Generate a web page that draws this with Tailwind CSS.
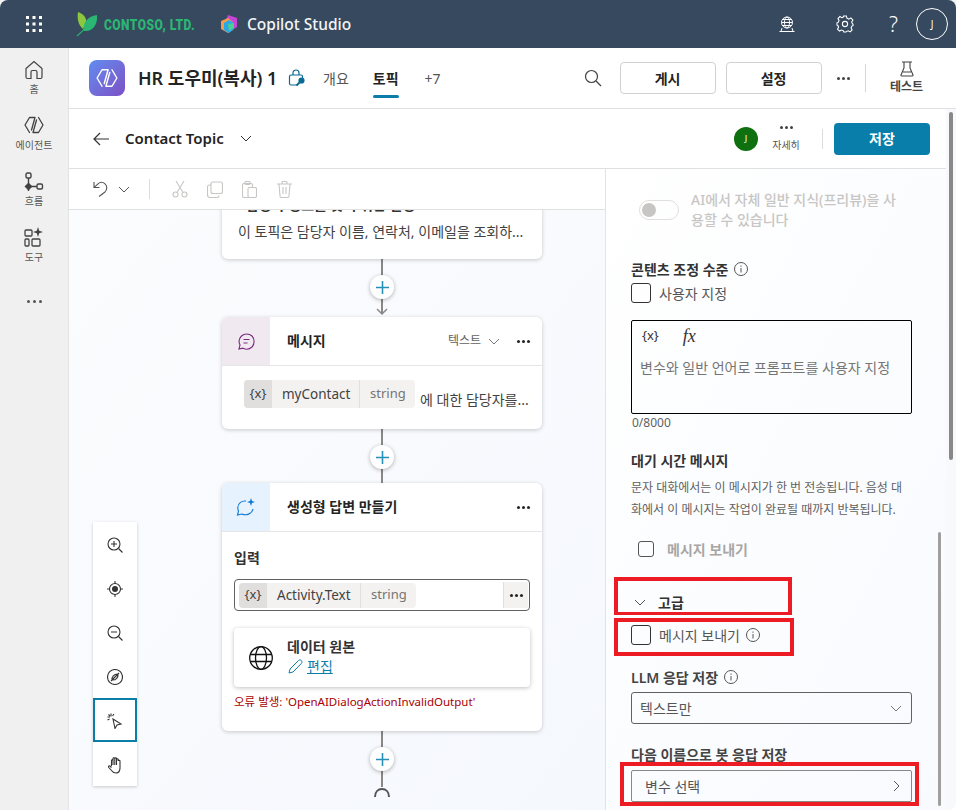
<!DOCTYPE html>
<html lang="ko">
<head>
<meta charset="UTF-8">
<title>Copilot Studio</title>
<script src="https://cdn.jsdelivr.net/npm/@tailwindcss/browser@4"></script>
</head>
<body class="bg-white font-['Noto_Sans','Noto_Sans_CJK_KR',sans-serif] text-[14px] text-[#242424]">
<div class="relative w-[956px] h-[810px] overflow-hidden flex flex-col bg-[#f3f3f3]">

<!-- top bar -->
<header class="h-[48px] shrink-0 bg-[#36495f] rounded-t-lg flex items-center text-white">
  <svg class="ml-[26px] w-[16px] h-[16px]" viewBox="0 0 16 16" fill="#fff"><rect x="0" y="0" width="3" height="3"/><rect x="6.5" y="0" width="3" height="3"/><rect x="13" y="0" width="3" height="3"/><rect x="0" y="6.5" width="3" height="3"/><rect x="6.5" y="6.5" width="3" height="3"/><rect x="13" y="6.5" width="3" height="3"/><rect x="0" y="13" width="3" height="3"/><rect x="6.5" y="13" width="3" height="3"/><rect x="13" y="13" width="3" height="3"/></svg>
  <svg class="ml-[34px] w-[22px] h-[25px]" viewBox="0 0 22 25"><path d="M1 24C5 21 8 18 11 13" stroke="#2bb673" stroke-width="1.2" fill="none"/><path d="M7 17C2 13 1 6 2 0C7 2 11 5 10 11Z" fill="#8dc63f"/><path d="M8 19C6 12 11 4 21 3C22 12 17 20 8 19Z" fill="#2bb673"/></svg>
  <span class="ml-[6px] w-[116px] font-['Roboto',sans-serif] font-black text-[15px] tracking-[0.6px] text-[#2bb673] whitespace-nowrap origin-left scale-x-[0.8] translate-y-px">CONTOSO, LTD.</span>
  <svg class="w-[18px] h-[18px]" viewBox="0 0 18 18"><path d="M8 0L17 3V12L12 15L5 8Z" fill="#c644d8"/><path d="M1 6L8 3L13 7V15L8 18L1 14Z" fill="#f59a4a"/><path d="M4 8L9 5L14 8V14L9 18L4 15Z" fill="#27a9e8"/><path d="M8 9L14 8V13L9 16Z" fill="#4ad08f"/></svg>
  <span class="ml-[9px] text-[15.5px] font-medium text-[#f5f5f5] translate-y-px">Copilot Studio</span>
  <div class="ml-auto flex items-center">
    <svg class="w-[16px] h-[16px]" viewBox="0 0 16 16" fill="none" stroke="#fff" stroke-width="1"><circle cx="8" cy="6.5" r="5.5"/><ellipse cx="8" cy="6.5" rx="2.5" ry="5.5"/><path d="M2.5 6.5H13.5M3.5 3.5H12.5M3.5 9.5H12.5M0.5 15.5H15.5M2 15.5L3 12M14 15.5L13 12"/></svg>
    <svg class="ml-[41px] w-[18px] h-[18px]" viewBox="0 0 18 18" fill="none" stroke="#fff" stroke-width="1.1"><circle cx="9" cy="9" r="2.6"/><path d="M7.6 1H10.4L10.9 3.2L12.9 4.1L14.9 2.9L16.9 5L15.7 7L16.5 8.9L17 9.1V10.7L15.8 11.1L15.1 13L16.1 15L14.2 16.9L12.2 15.8L10.4 16.6L10 17H7.8L7.4 15.8L5.5 15L3.5 16.1L1.5 14.1L2.6 12.2L1.9 10.5L1 10.2V7.8L2.2 7.4L3 5.5L2 3.5L3.9 1.5L5.9 2.7L7.3 2.1Z"/></svg>
    <span class="ml-[35px] text-[21px] leading-none font-light text-white w-[12px]">?</span>
    <span class="ml-[15px] mr-[8px] w-[32px] h-[32px] rounded-full border border-white flex items-center justify-center text-[10px]">J</span>
  </div>
</header>

<div class="flex flex-1 min-h-0">
  <!-- left rail -->
  <nav class="w-[68px] shrink-0 bg-[#f0f0f0] flex flex-col items-center text-[10px] leading-[14px] text-[#555]">
    <svg class="mt-[12px] w-[20px] h-[20px]" viewBox="0 0 20 20" fill="none" stroke="#424242" stroke-width="1.2"><path d="M2 8.5L10 1.5L18 8.5V17C18 18 17.4 18.5 16.5 18.5H13V12C13 11 12.5 10.5 11.5 10.5H8.5C7.5 10.5 7 11 7 12V18.5H3.5C2.6 18.5 2 18 2 17Z"/></svg>
    <span class="mt-[2px]">홈</span>
    <svg class="mt-[19px] w-[20px] h-[20px]" viewBox="0 0 20 20" fill="none" stroke="#424242" stroke-width="1.300" stroke-linejoin="round" stroke-linecap="round"><path d="M5.500 17.500L1 10L5.500 2.500H11L7.500 15"/><path d="M14.500 2.500L19 10L14.500 17.500H9L12.500 5"/></svg>
    <span class="mt-[3px]">에이전트</span>
    <svg class="mt-[20px] w-[20px] h-[24px]" viewBox="0 0 20 24" fill="none" stroke="#424242" stroke-width="1.400"><rect x="2" y="1" width="5" height="5" rx="1.5"/><path d="M4.5 6V19M7 14.500H13"/><path d="M4.500 11.500L7.500 14.500L4.500 17.500L1.500 14.500Z" fill="#424242"/><rect x="13" y="12" width="5.500" height="5" rx="1.500"/></svg>
    <span class="-mt-[2px]">흐름</span>
    <svg class="mt-[19px] w-[20px] h-[20px]" viewBox="0 0 20 20" fill="none" stroke="#424242" stroke-width="1.300"><rect x="1" y="3" width="7" height="6" rx="1"/><rect x="1" y="12" width="4" height="7" rx="1"/><rect x="8" y="12" width="8" height="7" rx="1"/><path d="M14 0L15.200 3.800L19 5L15.200 6.200L14 10L12.800 6.200L9 5L12.800 3.800Z" fill="#424242" stroke="none"/></svg>
    <span class="mt-[3px]">도구</span>
    <div class="mt-[36px] flex gap-[3px]"><i class="w-[3px] h-[3px] rounded-full bg-[#555]"></i><i class="w-[3px] h-[3px] rounded-full bg-[#555]"></i><i class="w-[3px] h-[3px] rounded-full bg-[#555]"></i></div>
  </nav>

  <main class="flex-1 min-w-0 flex flex-col border-l border-[#e3e3e3] bg-white">
    <!-- agent header -->
    <div class="h-[61px] shrink-0 flex items-center border-b border-[#e0e0e0] pl-[20px]">
      <div class="w-[36px] h-[36px] rounded-lg bg-gradient-to-br from-[#5d8df0] to-[#7a4fc4] flex items-center justify-center">
        <svg class="w-[22px] h-[22px]" viewBox="0 0 20 20" fill="none" stroke="#fff" stroke-width="1.300" stroke-linejoin="round" stroke-linecap="round"><path d="M5.500 17.500L1 10L5.500 2.500H11L7.500 15"/><path d="M14.500 2.500L19 10L14.500 17.500H9L12.500 5"/></svg>
      </div>
      <span class="ml-[13px] text-[18px] font-semibold whitespace-nowrap w-[150px]">HR 도우미(복사) 1</span>
      <svg class="w-[18px] h-[18px]" viewBox="0 0 18 18" fill="none" stroke="#0b6a94" stroke-width="1.200"><path d="M5 6V4C5 2 6.500 1 8 1C9.500 1 11 2 11 4V6"/><path d="M9 16H3C2 16 1.500 15.500 1.500 14.500V7.500C1.500 6.500 2 6 3 6H13C14 6 14.500 6.500 14.500 7.500V9"/><circle cx="13.500" cy="11.500" r="2.500" fill="#0b6a94"/><path d="M12 13L8.500 16.500" stroke-width="2"/></svg>
      <span class="ml-[17px] text-[#555]">개요</span>
      <span class="relative ml-[24px] font-semibold">토픽<i class="absolute left-0 right-0 top-[27px] h-[3px] rounded-sm bg-[#0b7ea8]"></i></span>
      <span class="ml-[26px] text-[#555]">+7</span>
      <svg class="ml-[143px] w-[18px] h-[18px]" viewBox="0 0 18 18" fill="none" stroke="#424242" stroke-width="1.200"><circle cx="7.500" cy="7.500" r="6"/><path d="M12 12L17 17"/></svg>
      <button class="ml-[18px] w-[96px] h-[32px] border border-[#d1d1d1] rounded font-bold">게시</button>
      <button class="ml-[10px] w-[96px] h-[32px] border border-[#d1d1d1] rounded font-bold">설정</button>
      <div class="ml-[15px] flex gap-[2px]"><i class="w-[3px] h-[3px] rounded-full bg-[#424242]"></i><i class="w-[3px] h-[3px] rounded-full bg-[#424242]"></i><i class="w-[3px] h-[3px] rounded-full bg-[#424242]"></i></div>
      <i class="ml-[15px] w-px h-[28px] bg-[#d6d6d6]"></i>
      <div class="ml-[25px] w-[32px] flex flex-col items-center">
        <svg class="w-[14px] h-[16px]" viewBox="0 0 14 16" fill="none" stroke="#424242" stroke-width="1.100"><path d="M2 1H12M4 1V7L1 14C0.800 14.600 1.200 15 1.800 15H12.200C12.800 15 13.200 14.600 13 14L10 7V1M3 11H11"/></svg>
        <span class="mt-[2px] text-[12px] leading-[16px] font-semibold text-[#444] whitespace-nowrap">테스트</span>
      </div>
    </div>

    <div class="flex-1 min-h-0 flex">
      <div class="w-[877px] shrink-0 flex flex-col">
        <!-- topic row -->
        <div class="h-[60px] shrink-0 flex items-center border-b border-[#e0e0e0] pl-[24px]">
          <svg class="w-[16px] h-[14px]" viewBox="0 0 16 14" fill="none" stroke="#333" stroke-width="1.200"><path d="M16 7H1M7 1L1 7L7 13"/></svg>
          <span class="ml-[16px] w-[115px] text-[15px] font-semibold whitespace-nowrap">Contact Topic</span>
          <svg class="w-[12px] h-[7px]" viewBox="0 0 12 7" fill="none" stroke="#333"><path d="M1 1L6 6L11 1"/></svg>
          <span class="ml-[482px] w-[24px] h-[24px] rounded-full bg-[#0e700e] text-white text-[9px] flex items-center justify-center">J</span>
          <div class="ml-[12px] w-[32px] flex flex-col items-center">
            <div class="flex gap-[2px]"><i class="w-[3px] h-[3px] rounded-full bg-[#424242]"></i><i class="w-[3px] h-[3px] rounded-full bg-[#424242]"></i><i class="w-[3px] h-[3px] rounded-full bg-[#424242]"></i></div>
            <span class="mt-[9px] text-[10px] leading-[14px] text-[#555] whitespace-nowrap">자세히</span>
          </div>
          <i class="ml-[20px] w-px h-[20px] bg-[#dcdcdc]"></i>
          <button class="ml-[11px] w-[96px] h-[32px] rounded bg-[#0a7eaa] text-white font-bold">저장</button>
        </div>

        <div class="flex-1 min-h-0 flex">
          <!-- canvas column -->
          <section class="relative w-[537px] shrink-0 border-r border-[#e3e3e3] bg-gradient-to-br from-[#fbfcfe] to-[#f5f8fd] overflow-hidden">
            <!-- toolbar -->
            <div class="relative z-10 h-[41px] bg-white border-b border-[#e0e0e0] flex items-center pl-[24px]">
              <svg class="w-[15px] h-[16px]" viewBox="0 0 15 16" fill="none" stroke="#555" stroke-width="1.100"><path d="M1 1V6.500H6.500M1.200 6.300L5 2.800C7 1 10 1 12 2.800C14.500 5 14.300 8.500 12 11L6 15.500"/></svg>
              <svg class="ml-[10px] w-[12px] h-[7px]" viewBox="0 0 12 7" fill="none" stroke="#555"><path d="M1 1L6 6L11 1"/></svg>
              <i class="ml-[19px] w-px h-[20px] bg-[#dcdcdc]"></i>
              <svg class="ml-[22px] w-[16px] h-[18px]" viewBox="0 0 16 18" fill="none" stroke="#c8c6c4" stroke-width="1.100"><circle cx="3.500" cy="14.500" r="2.500"/><circle cx="12.500" cy="14.500" r="2.500"/><path d="M5 12.500L12 1M11 12.500L4 1"/></svg>
              <svg class="ml-[19px] w-[16px] h-[17px]" viewBox="0 0 16 17" fill="none" stroke="#c8c6c4" stroke-width="1.100"><rect x="4" y="1" width="11.500" height="11.500" rx="2"/><path d="M4 4H2.500C1.500 4 0.500 5 0.500 6V14C0.500 15.500 1.500 16.500 3 16.500H10C11 16.500 12 15.500 12 14.500"/></svg>
              <svg class="ml-[19px] w-[15px] h-[17px]" viewBox="0 0 15 17" fill="none" stroke="#c8c6c4" stroke-width="1.100"><rect x="0.500" y="2.500" width="10" height="14" rx="1.500"/><rect x="3" y="0.500" width="5" height="3" rx="1"/><rect x="6" y="6.500" width="8.500" height="10" rx="1.500" fill="#fff"/></svg>
              <svg class="ml-[20px] w-[15px] h-[17px]" viewBox="0 0 15 17" fill="none" stroke="#c8c6c4" stroke-width="1.100"><path d="M0 3H15M5 3V1.500C5 1 5.500 0.500 6 0.500H9C9.500 0.500 10 1 10 1.500V3M2 3L3 15C3 16 3.800 16.500 4.500 16.500H10.500C11.200 16.500 12 16 12 15L13 3M6 6V13M9 6V13"/></svg>
            </div>

            <!-- diagram nodes: coordinates are relative to canvas (x-69, y-169) -->
            <i class="absolute left-[312px] top-[80px] w-[2px] h-[65px] bg-[#8a8886]"></i>
            <svg class="absolute left-[306px] top-[139px] w-[14px] h-[8px]" viewBox="0 0 14 8" fill="none" stroke="#8a8886" stroke-width="1.500"><path d="M2 1L7 6L12 1"/></svg>
            <i class="absolute left-[312px] top-[255px] w-[2px] h-[60px] bg-[#8a8886]"></i>
            <i class="absolute left-[312px] top-[556px] w-[2px] h-[62px] bg-[#8a8886]"></i>
            <svg class="absolute left-[304px] top-[618px] w-[18px] h-[10px]" viewBox="0 0 18 10" fill="none" stroke="#555" stroke-width="2"><path d="M2 10C2 5 5 2 9 2C13 2 16 5 16 10"/></svg>

            <article class="absolute left-[153px] top-[20px] w-[320px] h-[70px] bg-white rounded-md shadow-[0_1px_4px_rgba(0,0,0,0.2)] px-[16px]">
              <p class="absolute left-[24px] top-[6px] text-[14px] font-semibold text-[#333] leading-[20px] whitespace-nowrap">담당자 정보를 찾기 위한 설명</p>
              <p class="absolute left-[16px] top-[33px] leading-[20px] text-[#424242] whitespace-nowrap">이 토픽은 담당자 이름, 연락처, 이메일을 조회하...</p>
            </article>

            <article class="absolute left-[153px] top-[148px] w-[320px] h-[112px] bg-white rounded-md shadow-[0_1px_4px_rgba(0,0,0,0.2)] overflow-hidden">
              <div class="h-[49px] border-b border-[#e6e6e6] flex items-center">
                <div class="w-[48px] h-[48px] bg-[#f0e9f0] flex items-center justify-center">
                  <svg class="w-[17px] h-[17px]" viewBox="0 0 17 17" fill="none" stroke="#7b2a83" stroke-width="1.100"><path d="M1 16L2 12C0.500 9 1 5.500 3.500 3C6.500 0.200 11 0.300 14 3C16.800 6 16.800 11 14 14C11.500 16.300 8 16.700 5 15.200Z"/><path d="M5.500 6.500H11.500M5.500 10H9.500"/></svg>
                </div>
                <span class="ml-[17px] font-semibold -translate-y-px">메시지</span>
                <span class="ml-auto text-[12px] text-[#616161]">텍스트</span>
                <svg class="ml-[7px] w-[12px] h-[7px]" viewBox="0 0 12 7" fill="none" stroke="#777"><path d="M1 1L6 6L11 1"/></svg>
                <div class="ml-[17px] mr-[12px] flex gap-[2px]"><i class="w-[3px] h-[3px] rounded-full bg-[#242424]"></i><i class="w-[3px] h-[3px] rounded-full bg-[#242424]"></i><i class="w-[3px] h-[3px] rounded-full bg-[#242424]"></i></div>
              </div>
              <div class="flex items-center mt-[14px] pl-[22px] whitespace-nowrap">
                <div class="h-[28px] w-[171px] bg-[#f3f2f1] rounded-sm flex items-center overflow-hidden text-[#424242]">
                  <span class="w-[28px] h-full bg-[#e1dfdd] flex items-center justify-center text-[13px]">{x}</span>
                  <span class="ml-[10px] w-[77px] text-[13.500px]">myContact</span>
                  <i class="w-px h-full bg-[#e1dfdd]"></i>
                  <span class="ml-[10px] text-[13px] text-[#757575]">string</span>
                </div>
                <span class="ml-[5px] translate-y-[5px] text-[#424242]">에 대한 담당자를...</span>
              </div>
            </article>

            <article class="absolute left-[153px] top-[314px] w-[320px] h-[248px] bg-white rounded-md shadow-[0_1px_4px_rgba(0,0,0,0.2)] overflow-hidden">
              <div class="h-[49px] border-b border-[#e6e6e6] flex items-center">
                <div class="w-[48px] h-[48px] bg-[#e6f2fd] flex items-center justify-center">
                  <svg class="w-[20px] h-[20px]" viewBox="0 0 20 20" fill="none" stroke="#0f78d4" stroke-width="1.100"><path d="M10 4C6 3.500 2 6 1.800 10.500C1.700 12 2 13 2.500 14L1.500 18L6 17C10 19 16 17 17 12"/><path d="M15 1L16 4L19 5L16 6L15 9L14 6L11 5L14 4Z" fill="#0f78d4" stroke="none"/></svg>
                </div>
                <span class="ml-[17px] font-semibold -translate-y-px">생성형 답변 만들기</span>
                <div class="ml-auto mr-[12px] flex gap-[2px]"><i class="w-[3px] h-[3px] rounded-full bg-[#242424]"></i><i class="w-[3px] h-[3px] rounded-full bg-[#242424]"></i><i class="w-[3px] h-[3px] rounded-full bg-[#242424]"></i></div>
              </div>
              <div class="px-[12px]">
                <p class="mt-[16px] h-[20px] leading-[20px] font-semibold text-[#333]">입력</p>
                <div class="mt-[11px] h-[32px] border border-[#616161] rounded-sm flex items-center pl-[4px] pr-px">
                  <div class="h-[25px] w-[177px] bg-[#f3f2f1] rounded-sm flex items-center overflow-hidden text-[#424242]">
                    <span class="w-[28px] h-full bg-[#e1dfdd] flex items-center justify-center text-[13px]">{x}</span>
                    <span class="ml-[10px] w-[83px] text-[13.500px] whitespace-nowrap">Activity.Text</span>
                    <i class="w-px h-full bg-[#e1dfdd]"></i>
                    <span class="ml-[10px] text-[13px] text-[#757575]">string</span>
                  </div>
                  <div class="ml-auto w-[25px] h-[26px] bg-[#f3f2f1] border-l border-[#e1dfdd] flex items-center justify-center gap-[2px]"><i class="w-[3px] h-[3px] rounded-full bg-[#242424]"></i><i class="w-[3px] h-[3px] rounded-full bg-[#242424]"></i><i class="w-[3px] h-[3px] rounded-full bg-[#242424]"></i></div>
                </div>
                <div class="mt-[17px] h-[59px] bg-white rounded-sm shadow-[0_1px_4px_rgba(0,0,0,0.25)] flex items-center pl-[15px]">
                  <svg class="w-[24px] h-[24px]" viewBox="0 0 24 24" fill="none" stroke="#111" stroke-width="1.300"><circle cx="12" cy="12" r="11.300"/><ellipse cx="12" cy="12" rx="5.500" ry="11.300"/><path d="M1.500 8.500H22.500M1.500 15.500H22.500"/></svg>
                  <div class="ml-[14px] -translate-y-px">
                    <p class="leading-[20px] font-semibold text-[#333]">데이터 원본</p>
                    <p class="flex items-center h-[20px]">
                      <svg class="ml-[1px] w-[15px] h-[15px]" viewBox="0 0 15 15" fill="none" stroke="#0b7ea8" stroke-width="1"><path d="M1 14L2 10L10.500 1.500C11.300 0.700 12.500 0.700 13.300 1.500C14.200 2.400 14.200 3.500 13.400 4.400L5 13Z"/></svg>
                      <a class="ml-[4px] text-[#0b7ea8] underline">편집</a>
                    </p>
                  </div>
                </div>
                <p class="mt-[7px] text-[11.500px] leading-[16px] text-[#a80000] whitespace-nowrap">오류 발생: 'OpenAIDialogActionInvalidOutput'</p>
              </div>
            </article>

            <!-- add buttons -->
            <span class="absolute left-[301px] top-[106px] w-[24px] h-[24px] rounded-full bg-white shadow-[0_1px_4px_rgba(0,0,0,0.3)] flex items-center justify-center"><svg class="w-[13px] h-[13px]" viewBox="0 0 13 13" stroke="#2590b8" stroke-width="1.600"><path d="M6.500 0V13M0 6.500H13"/></svg></span>
            <span class="absolute left-[301px] top-[276px] w-[24px] h-[24px] rounded-full bg-white shadow-[0_1px_4px_rgba(0,0,0,0.3)] flex items-center justify-center"><svg class="w-[13px] h-[13px]" viewBox="0 0 13 13" stroke="#2590b8" stroke-width="1.600"><path d="M6.500 0V13M0 6.500H13"/></svg></span>
            <span class="absolute left-[301px] top-[578px] w-[24px] h-[24px] rounded-full bg-white shadow-[0_1px_4px_rgba(0,0,0,0.3)] flex items-center justify-center"><svg class="w-[13px] h-[13px]" viewBox="0 0 13 13" stroke="#2590b8" stroke-width="1.600"><path d="M6.500 0V13M0 6.500H13"/></svg></span>

            <!-- zoom controls -->
            <div class="absolute left-[24px] top-[353px] w-[44px] bg-white shadow-[0_1px_3px_rgba(0,0,0,0.2)] flex flex-col">
              <span class="h-[44px] pt-[2px] flex items-center justify-center"><svg class="w-[16px] h-[16px]" viewBox="0 0 16 16" fill="none" stroke="#333" stroke-width="1.100"><circle cx="7" cy="7" r="6"/><path d="M11.500 11.500L15.500 15.500M7 4V10M4 7H10"/></svg></span>
              <span class="h-[44px] pt-[2px] flex items-center justify-center"><svg class="w-[16px] h-[16px]" viewBox="0 0 16 16" fill="none" stroke="#333" stroke-width="1.100"><circle cx="8" cy="8" r="5.500"/><circle cx="8" cy="8" r="3" fill="#333" stroke="none"/><path d="M8 0V2.500M8 13.500V16M0 8H2.500M13.500 8H16"/></svg></span>
              <span class="h-[44px] pt-[2px] flex items-center justify-center"><svg class="w-[16px] h-[16px]" viewBox="0 0 16 16" fill="none" stroke="#333" stroke-width="1.100"><circle cx="7" cy="7" r="6"/><path d="M11.500 11.500L15.500 15.500M4 7H10"/></svg></span>
              <span class="h-[44px] pt-[2px] flex items-center justify-center"><svg class="w-[16px] h-[16px]" viewBox="0 0 16 16" fill="none" stroke="#333" stroke-width="1.100"><circle cx="8" cy="8" r="7.500"/><path d="M5 11C4.500 8 7 4.800 11 5C11.500 8 9 11.500 5 11ZM4 12L12 4"/></svg></span>
              <span class="h-[44px] pt-[2px] border-2 border-[#0b7ea8] flex items-center justify-center"><svg class="w-[16px] h-[16px]" viewBox="0 0 16 16" fill="none" stroke="#333" stroke-width="1.100"><path d="M6 6L14 11L10 12L8 15.500Z"/><path d="M4 0.500V3.500M0.500 4H3M1.500 1.500L3 3M7 1L5.500 3M0.500 7L2.500 6"/></svg></span>
              <span class="h-[44px] pt-[2px] flex items-center justify-center"><svg class="w-[15px] h-[17px]" viewBox="0 0 15 17" fill="none" stroke="#333" stroke-width="1.100"><path d="M3.500 9V3.500C3.500 2.500 5 2.500 5 3.500V1.500C5 0.500 6.800 0.500 6.800 1.500V1.500C6.800 0.500 8.500 0.500 8.500 1.500V2.500C8.500 1.500 10.200 1.500 10.200 2.500V4C10.200 3 12 3 12 4V11C12 14 10.500 16 8 16C6 16 5 15.500 4 14L0.800 10.500C0 9.500 1 8.300 2 9L3.500 10.500M5 3.500V8M6.800 1.500V8M8.500 2.500V8"/></svg></span>
            </div>
          </section>

          <!-- properties panel -->
          <aside class="relative flex-1 min-w-0 pl-[25px] bg-gradient-to-br from-white to-[#f8fafe]">
            <div class="mt-[21px] ml-[8px] flex items-start">
              <span class="mt-[10px] w-[40px] h-[20px] rounded-full border border-[#e1dfdd] flex items-center pl-[1px]"><i class="w-[14px] h-[14px] ml-[1px] rounded-full bg-[#c8c6c4]"></i></span>
              <p class="ml-[12px] leading-[20px] font-medium text-[#c8c6c4] whitespace-nowrap">AI에서 자체 일반 지식(프리뷰)을 사<br>용할 수 있습니다</p>
            </div>
            <div class="mt-[29px] h-[20px] flex items-center">
              <span class="font-semibold text-[#333]">콘텐츠 조정 수준</span>
              <svg class="ml-[6px] w-[14px] h-[14px]" viewBox="0 0 14 14" fill="none" stroke="#555"><circle cx="7" cy="7" r="6.500"/><path d="M7 6V10.500M7 3.500V4.800"/></svg>
            </div>
            <label class="mt-[4px] flex items-center h-[20px]">
              <i class="w-[20px] h-[20px] border border-[#333] rounded-[3px]"></i>
              <span class="ml-[8px] text-[#555]">사용자 지정</span>
            </label>
            <div class="mt-[17px] w-[281px] h-[94px] border border-black rounded-[2px] px-[8px]">
              <div class="h-[30px] flex items-center text-[#333]">
                <span class="ml-[2px] text-[13px]">{x}</span>
                <span class="ml-[24px] font-['Liberation_Serif',serif] italic text-[18px] leading-none">fx</span>
              </div>
              <p class="mt-[7px] text-[#757575] leading-[20px] whitespace-nowrap">변수와 일반 언어로 프롬프트를 사용자 지정</p>
            </div>
            <p class="mt-[1px] ml-px text-[12px] leading-[16px] text-[#616161]">0/8000</p>
            <p class="mt-[20px] h-[20px] leading-[20px] font-semibold text-[#333]">대기 시간 메시지</p>
            <p class="mt-[6px] text-[12px] leading-[22px] text-[#616161] whitespace-nowrap">문자 대화에서는 이 메시지가 한 번 전송됩니다. 음성 대<br>화에서 이 메시지는 작업이 완료될 때까지 반복됩니다.</p>
            <label class="mt-[18px] ml-[7px] flex items-center h-[20px]">
              <i class="w-[16px] h-[16px] border border-[#555] rounded-[3px]"></i>
              <span class="ml-[13px] font-semibold text-[#a8a6a4]">메시지 보내기</span>
            </label>
            <div class="mt-[33px] ml-[3px] h-[20px] flex items-center">
              <svg class="w-[12px] h-[7px]" viewBox="0 0 12 7" fill="none" stroke="#555"><path d="M1 1L6 6L11 1"/></svg>
              <span class="ml-[12px] font-semibold text-[#333]">고급</span>
            </div>
            <label class="mt-[13px] flex items-center h-[20px]">
              <i class="w-[20px] h-[20px] border border-[#333] rounded-[3px]"></i>
              <span class="ml-[8px] text-[#555]">메시지 보내기</span>
              <svg class="ml-[6px] w-[14px] h-[14px]" viewBox="0 0 14 14" fill="none" stroke="#555"><circle cx="7" cy="7" r="6.500"/><path d="M7 6V10.500M7 3.500V4.800"/></svg>
            </label>
            <div class="mt-[22px] h-[20px] flex items-center">
              <span class="font-semibold text-[#444]">LLM 응답 저장</span>
              <svg class="ml-[6px] w-[14px] h-[14px]" viewBox="0 0 14 14" fill="none" stroke="#555"><circle cx="7" cy="7" r="6.500"/><path d="M7 6V10.500M7 3.500V4.800"/></svg>
            </div>
            <div class="mt-[5px] w-[281px] h-[32px] border border-[#616161] rounded-[3px] flex items-center pl-[8px] pr-[9px] text-[#555]">
              <span>텍스트만</span>
              <svg class="ml-auto w-[12px] h-[7px]" viewBox="0 0 12 7" fill="none" stroke="#777"><path d="M1 1L6 6L11 1"/></svg>
            </div>
            <p class="mt-[21px] h-[20px] leading-[20px] font-semibold text-[#444]">다음 이름으로 봇 응답 저장</p>
            <div class="mt-[5px] w-[281px] h-[32px] border border-[#8a8886] rounded-[2px] flex items-center pl-[13px] pr-[11px] text-[#555]">
              <span>변수 선택</span>
              <svg class="ml-auto w-[7px] h-[12px]" viewBox="0 0 7 12" fill="none" stroke="#555"><path d="M1 1L6 6L1 11"/></svg>
            </div>
            <!-- panel scrollbar -->
            <i class="absolute left-[332px] top-[363px] w-[3px] h-[274px] rounded-full bg-[#a19f9d]"></i>
          </aside>
        </div>
      </div>
      <!-- outer scrollbar -->
      <div class="flex-1 bg-[#f7f9fd] relative rounded-br-lg">
        <i class="absolute left-[3px] top-[3px] w-[4px] h-[348px] rounded-full bg-[#8a8886]"></i>
      </div>
    </div>
  </main>
</div>

<!-- red annotation boxes -->
<div class="absolute left-[614px] top-[577px] w-[178px] h-[38px] border-[4px] border-b-[3px] border-[#ed1c24]"></div>
<div class="absolute left-[614px] top-[618px] w-[180px] h-[38px] border-[4px] border-[#ed1c24]"></div>
<div class="absolute left-[620px] top-[762px] w-[299px] h-[44px] border-[4px] border-[#ed1c24]"></div>
</div>
</body>
</html>
